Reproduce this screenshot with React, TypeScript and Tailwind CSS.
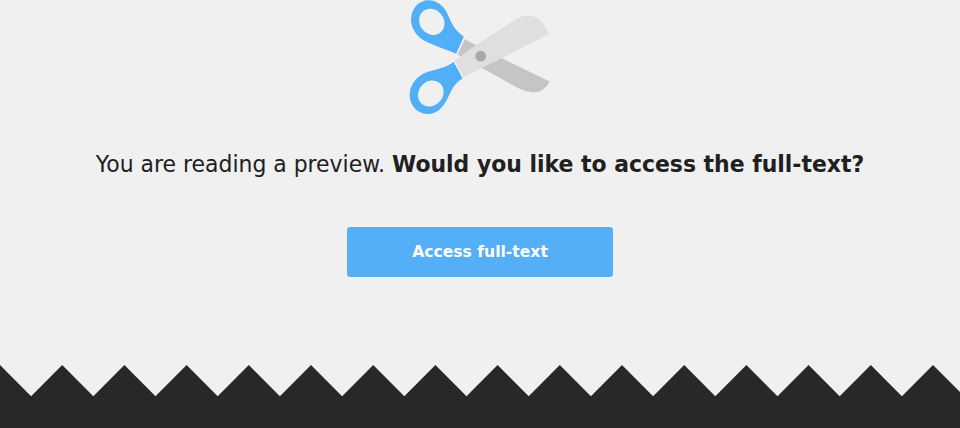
function Scissors() {
  return (
    <svg className="block" width="144" height="116" viewBox="408 0 144 116" aria-hidden="true">
      <path d="M464.500 39 L500 57.500 L549.700 81.500 Q544 92.500 533 92.500 Q526 92 519 88.500 L457.500 54.500 Z" fill="#c5c5c5" />
      <path d="M454.500 60.500 L474 46.500 L513 21 Q521 15.500 527 15.400 Q535 15.400 540 20 Q545 25 548.500 34 L502 58 L463 77.500 Z" fill="#e0dedf" />
      <path
        fill="#50aff6"
        d="M428.500 .3 C436 .3 443 5 447 13 C451 21 453 29 463.800 36.800 L456.300 53.800 C447 49.500 439 47.500 428 42.500 C417 37.500 411 29 411 19 C411.500 8 419 .3 428.500 .3 Z"
      />
      <path
        fill="#50aff6"
        d="M454.200 61.800 L462.700 78.200 C453 84 451 92 447 99.500 C443 108 436 114 428 114 C418 114 409.600 106 409.600 95 C410 84 417 76 426 72.500 C436 69 446 68 454.200 61.800 Z"
      />
      <ellipse cx="431.800" cy="21.900" rx="12" ry="13.700" fill="#f0f0f0" transform="rotate(-38 431.800 21.900)" />
      <ellipse cx="430.800" cy="93.500" rx="12" ry="13.700" fill="#f0f0f0" transform="rotate(42 430.800 93.500)" />
      <path d="M464.300 37.500 L456.800 54 M453.800 61.200 L463.200 78.200" stroke="#fafafa" strokeWidth="1" />
      <circle cx="480.700" cy="56.200" r="5.400" fill="#a9a8a9" />
    </svg>
  );
}

const PERIOD = 62.2;

function Zigzag() {
  const teeth = Array.from({ length: 16 }, (_, i) => {
    const x = i * PERIOD;
    return `L${x + PERIOD / 2} 31.2 L${x + PERIOD} 0`;
  }).join(" ");
  return (
    <svg className="block" width="960" height="32" viewBox="0 0 960 32" aria-hidden="true">
      <path d={`M0 0 ${teeth} V32 H0 Z`} fill="#282828" />
    </svg>
  );
}

export default function App() {
  return (
    <main className="flex h-[428px] w-[960px] flex-col items-center overflow-hidden bg-[#f0f0f0] font-['DejaVu_Sans',sans-serif]">
      <div className="h-[116px] shrink-0">
        <Scissors />
      </div>
      <p className="mt-[33px] h-8 shrink-0 origin-center scale-y-105 text-[21.93px] leading-8 whitespace-nowrap text-[#202020]">
        You are reading a preview. <strong className="font-bold">Would you like to access the full-text?</strong>
      </p>
      <button className="mt-[46px] h-[50px] w-[266px] shrink-0 rounded-[3px] bg-[#54aff7] pt-[2px] text-[15.6px] font-bold text-white">
        Access full-text
      </button>
      <footer className="mt-auto w-full shrink-0">
        <Zigzag />
        <div className="h-[31px] bg-[#282828]" />
      </footer>
    </main>
  );
}
